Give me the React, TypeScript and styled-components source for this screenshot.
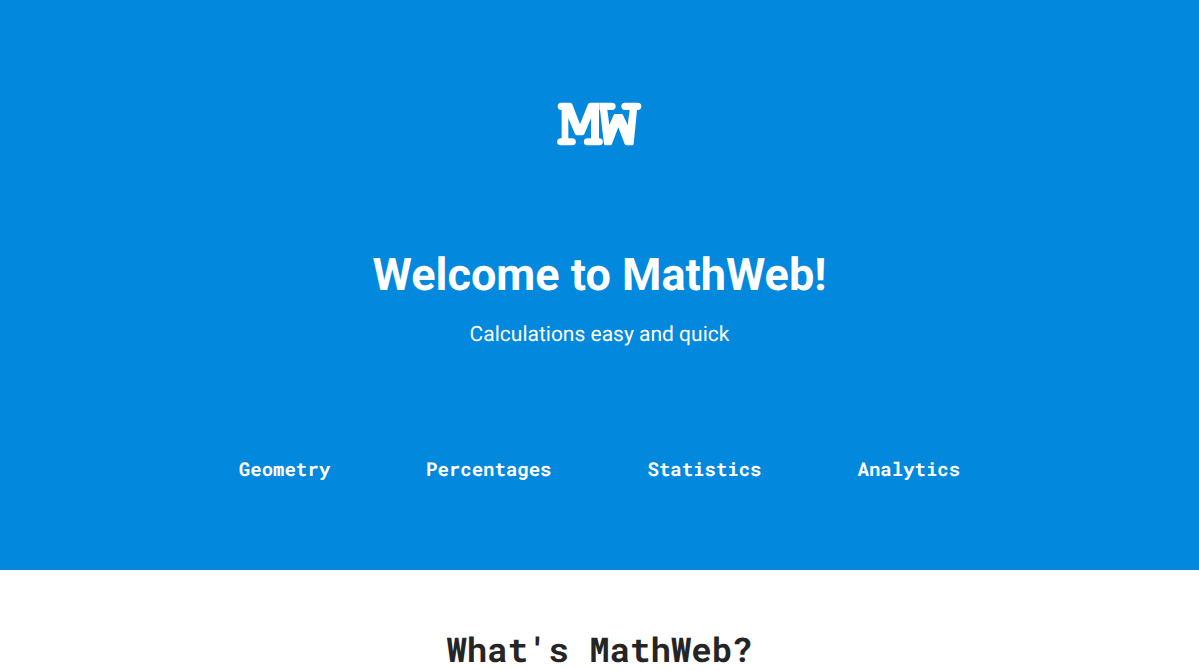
import React from 'react';
import styled, { createGlobalStyle } from 'styled-components';

const GlobalStyle = createGlobalStyle`
  * { box-sizing: border-box; }
  body {
    margin: 0;
    background: #fff;
    color: #252525;
    font-family: Roboto, sans-serif;
    text-rendering: geometricPrecision;
  }
`;

const Hero = styled.header`
  display: flex;
  flex-direction: column;
  align-items: center;
  padding: 102px 24px 87px;
  background: #0288dd;
  color: #fff;
`;

const LogoLink = styled.a`
  display: block;
  color: inherit;
  line-height: 0;
`;

const Title = styled.h1`
  margin: 99px 0 0;
  font-size: 45px;
  line-height: 60px;
  font-weight: 700;
`;

const Tagline = styled.p`
  margin: 16px 0 0;
  font-size: 21px;
  line-height: 28px;
`;

const Nav = styled.nav`
  display: flex;
  justify-content: center;
  gap: 96px;
  margin-top: 108px;
`;

const NavLink = styled.a`
  color: inherit;
  font-family: "Roboto Mono", "DejaVu Sans Mono", monospace;
  font-size: 19px;
  line-height: 26px;
  font-weight: 700;
  text-decoration: none;
`;

const About = styled.section`
  padding: 56px 24px 40px;
  text-align: center;
`;

const SectionTitle = styled.h2`
  margin: 0;
  font-family: "Roboto Mono", "DejaVu Sans Mono", monospace;
  font-size: 34px;
  line-height: 48px;
  font-weight: 700;
`;

const links = ['Geometry', 'Percentages', 'Statistics', 'Analytics'];

function Logo() {
  return (
    <svg width="85" height="44" viewBox="52 36 255 132" fill="currentColor" aria-hidden="true">
      <path d="M65 38H92Q96 38 98 43L121 103L145 43Q147 38 151 38H180V60H178V145H179A10 10 0 0 1 179 166H143A10 10 0 0 1 143 145H154V85L134 132Q132 136 128 136H112Q108 136 106 132L86 85V145H98A10 10 0 0 1 98 166H63A10 10 0 0 1 63 145H66V60H65A11 11 0 0 1 65 38Z" />
      <path d="M180 38H217A11 11 0 0 1 217 60H203L209 105L222 75Q223 72 227 72H245Q249 72 250 75L264 105L270 60H256A11 11 0 0 1 256 38H294A11 11 0 0 1 294 60H292L282 162Q281 166 277 166H260Q257 166 255 162L236 112L217 162Q216 166 212 166H198Q194 166 193 162L181 60Z" />
    </svg>
  );
}

export default function App() {
  return (
    <>
      <GlobalStyle />
      <Hero>
        <LogoLink href="#" aria-label="MathWeb home">
          <Logo />
        </LogoLink>
        <Title>Welcome to MathWeb!</Title>
        <Tagline>Calculations easy and quick</Tagline>
        <Nav>
          {links.map((label) => (
            <NavLink key={label} href={`#${label.toLowerCase()}`}>{label}</NavLink>
          ))}
        </Nav>
      </Hero>
      <About>
        <SectionTitle>What's MathWeb?</SectionTitle>
      </About>
    </>
  );
}
